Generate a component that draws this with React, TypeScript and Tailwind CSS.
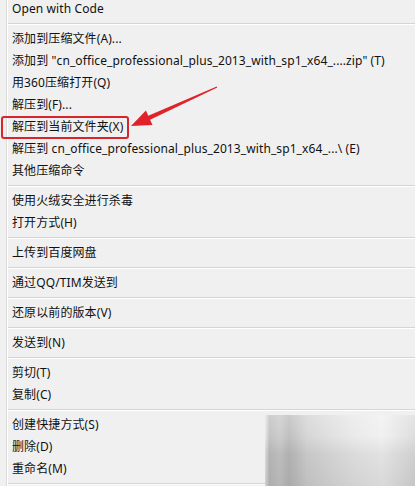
const ITEMS: (string | null)[] = [
  "Open with Code",
  null,
  "添加到压缩文件(A)...",
  "添加到 \"cn_office_professional_plus_2013_with_sp1_x64_....zip\" (T)",
  "用360压缩打开(Q)",
  "解压到(F)...",
  "解压到当前文件夹(X)",
  "解压到 cn_office_professional_plus_2013_with_sp1_x64_...\\ (E)",
  "其他压缩命令",
  null,
  "使用火绒安全进行杀毒",
  "打开方式(H)",
  null,
  "上传到百度网盘",
  null,
  "通过QQ/TIM发送到",
  null,
  "还原以前的版本(V)",
  null,
  "发送到(N)",
  null,
  "剪切(T)",
  "复制(C)",
  null,
  "创建快捷方式(S)",
  "删除(D)",
  "重命名(M)",
  null,
];

export default function App() {
  return (
    <div className="relative h-[486px] w-[415px] overflow-hidden bg-[#f0f0f0] font-['Noto_Sans','Noto_Sans_CJK_SC',sans-serif] text-[12px] tracking-[0.1px] text-[#111]">
      <div className="absolute inset-y-0 left-[6px] w-[2px] border-l border-[#dcdcdc] bg-white" />
      <div className="-mt-[2px] flex flex-col">
        {ITEMS.map((item, index) =>
          item === null ? (
            <div key={index} className="flex h-[8px] flex-col justify-center pl-[8px]">
              <div className="h-px bg-[#d5d5d5]" />
              <div className="h-px bg-white" />
            </div>
          ) : (
            <div key={index} className="flex h-[22px] items-center whitespace-nowrap pl-[12px] leading-none">
              {item}
            </div>
          )
        )}
      </div>

      {/* annotation: red box + arrow */}
      <div className="absolute left-[1px] top-[116px] h-[23px] w-[128px] rounded-[3px] border-2 border-[#d8242b]" />
      <svg className="absolute left-0 top-0" width="415" height="486" viewBox="0 0 415 486">
        <polygon
          points="216.7,86.4 148.3,115.7 145.9,110.4 131,126 152.5,125 150.1,119.7 217.3,87.6"
          fill="#e0222a"
        />
      </svg>

      {/* blurred watermark */}
      <div className="absolute bottom-0 right-0 h-[71px] w-[150px] bg-[linear-gradient(90deg,#e6e6e6_0%,#b9b9b9_3%,#c4c4c4_10%,#b5b5b5_16%,#cfcfcf_28%,#dcdcdc_45%,#e6e6e6_60%,#eeeeee_78%,#d8d8d8_100%)]">
        <div className="h-full w-full bg-[linear-gradient(180deg,rgba(255,255,255,0.3)_0%,rgba(255,255,255,0.15)_30%,rgba(140,140,140,0.12)_55%,rgba(120,120,120,0.18)_100%)]" />
      </div>
    </div>
  );
}
